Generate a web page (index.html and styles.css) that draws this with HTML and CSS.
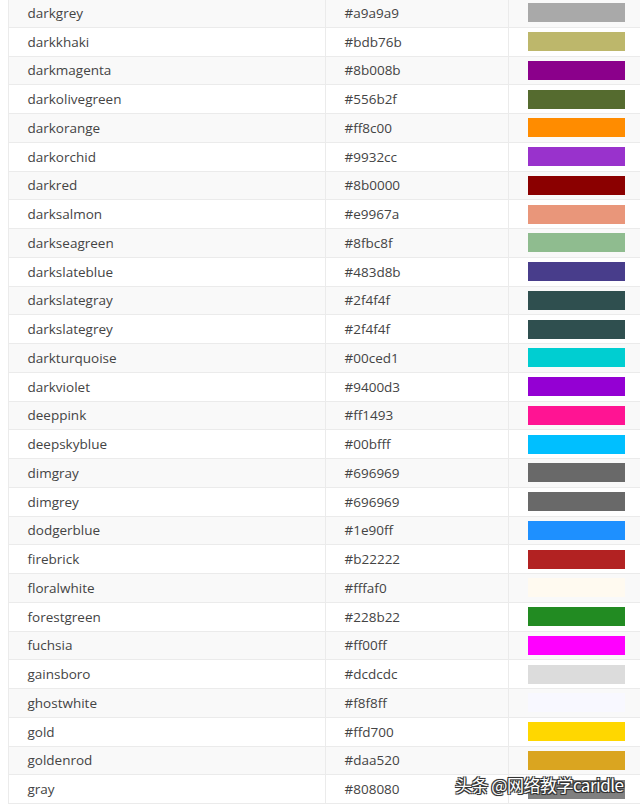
FILE: index.html
```html
<!DOCTYPE html>
<html>
<head>
<meta charset="utf-8">
<link rel="stylesheet" href="styles.css">
</head>
<body>
<table class="colors">
<colgroup><col class="c-name"><col class="c-hex"><col class="c-sw"></colgroup>
<tbody>
<tr><td>darkgrey</td><td>#a9a9a9</td><td><div class="sw" style="background:#a9a9a9"></div></td></tr>
<tr><td>darkkhaki</td><td>#bdb76b</td><td><div class="sw" style="background:#bdb76b"></div></td></tr>
<tr><td>darkmagenta</td><td>#8b008b</td><td><div class="sw" style="background:#8b008b"></div></td></tr>
<tr><td>darkolivegreen</td><td>#556b2f</td><td><div class="sw" style="background:#556b2f"></div></td></tr>
<tr><td>darkorange</td><td>#ff8c00</td><td><div class="sw" style="background:#ff8c00"></div></td></tr>
<tr><td>darkorchid</td><td>#9932cc</td><td><div class="sw" style="background:#9932cc"></div></td></tr>
<tr><td>darkred</td><td>#8b0000</td><td><div class="sw" style="background:#8b0000"></div></td></tr>
<tr><td>darksalmon</td><td>#e9967a</td><td><div class="sw" style="background:#e9967a"></div></td></tr>
<tr><td>darkseagreen</td><td>#8fbc8f</td><td><div class="sw" style="background:#8fbc8f"></div></td></tr>
<tr><td>darkslateblue</td><td>#483d8b</td><td><div class="sw" style="background:#483d8b"></div></td></tr>
<tr><td>darkslategray</td><td>#2f4f4f</td><td><div class="sw" style="background:#2f4f4f"></div></td></tr>
<tr><td>darkslategrey</td><td>#2f4f4f</td><td><div class="sw" style="background:#2f4f4f"></div></td></tr>
<tr><td>darkturquoise</td><td>#00ced1</td><td><div class="sw" style="background:#00ced1"></div></td></tr>
<tr><td>darkviolet</td><td>#9400d3</td><td><div class="sw" style="background:#9400d3"></div></td></tr>
<tr><td>deeppink</td><td>#ff1493</td><td><div class="sw" style="background:#ff1493"></div></td></tr>
<tr><td>deepskyblue</td><td>#00bfff</td><td><div class="sw" style="background:#00bfff"></div></td></tr>
<tr><td>dimgray</td><td>#696969</td><td><div class="sw" style="background:#696969"></div></td></tr>
<tr><td>dimgrey</td><td>#696969</td><td><div class="sw" style="background:#696969"></div></td></tr>
<tr><td>dodgerblue</td><td>#1e90ff</td><td><div class="sw" style="background:#1e90ff"></div></td></tr>
<tr><td>firebrick</td><td>#b22222</td><td><div class="sw" style="background:#b22222"></div></td></tr>
<tr><td>floralwhite</td><td>#fffaf0</td><td><div class="sw" style="background:#fffaf0"></div></td></tr>
<tr><td>forestgreen</td><td>#228b22</td><td><div class="sw" style="background:#228b22"></div></td></tr>
<tr><td>fuchsia</td><td>#ff00ff</td><td><div class="sw" style="background:#ff00ff"></div></td></tr>
<tr><td>gainsboro</td><td>#dcdcdc</td><td><div class="sw" style="background:#dcdcdc"></div></td></tr>
<tr><td>ghostwhite</td><td>#f8f8ff</td><td><div class="sw" style="background:#f8f8ff"></div></td></tr>
<tr><td>gold</td><td>#ffd700</td><td><div class="sw" style="background:#ffd700"></div></td></tr>
<tr><td>goldenrod</td><td>#daa520</td><td><div class="sw" style="background:#daa520"></div></td></tr>
<tr><td>gray</td><td>#808080</td><td><div class="sw" style="background:#808080"></div></td></tr>
</tbody>
</table>
<div class="watermark">头条 @网络教学caridle</div>
</body>
</html>
```
FILE: styles.css
```css
html, body {
  margin: 0;
  padding: 0;
  background: #fff;
  overflow: hidden;
}
body {
  width: 640px;
  height: 805px;
  position: relative;
}
.colors {
  border-collapse: collapse;
  table-layout: fixed;
  width: 660px;
  margin: -2px 0 0 8px;
  font-family: "Open Sans", "Noto Sans", sans-serif;
  font-size: 13.5px;
  color: #444;
}
.c-name { width: 317px; }
.c-hex { width: 183px; }
.c-sw { width: 160px; }
.colors td {
  height: 28.76px;
  padding: 0 0 0 18.5px;
  border: 1px solid #ebebeb;
  vertical-align: middle;
  box-sizing: border-box;
  white-space: nowrap;
}
.colors tr:nth-child(odd) td { background: #f9f9f9; }
.colors tr:nth-child(even) td { background: #fff; }
.sw {
  width: 97px;
  height: 19px;
}
.watermark {
  position: absolute;
  left: 455px;
  top: 772px;
  font-family: "Noto Sans CJK SC", sans-serif;
  font-size: 17px;
  color: #fff;
  text-shadow: -1px -1px 0 #333, 1px -1px 0 #333, -1px 1px 0 #333, 1px 1px 0 #333, 0 0 2px #000;
  letter-spacing: -0.5px;
}
```
